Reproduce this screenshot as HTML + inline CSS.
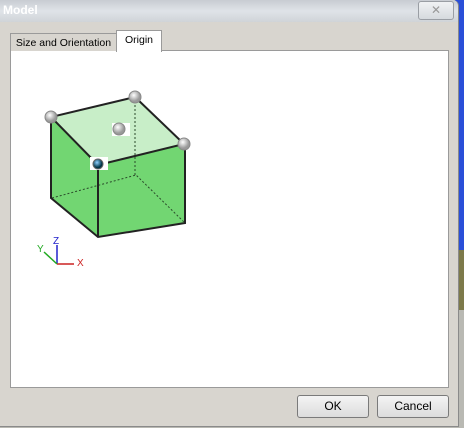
<!DOCTYPE html><html><head><style>
body{margin:0;width:464px;height:428px;overflow:hidden;background:#b9b9b3;font-family:"Liberation Sans",sans-serif;font-size:11px;position:relative}
.bg1{position:absolute;left:455px;top:0;width:9px;height:250px;background:#2a4fd8}
.bg2{position:absolute;left:455px;top:250px;width:9px;height:60px;background:#7d7a4a}
.win{position:absolute;left:0;top:0;width:458px;height:426px;background:#d8d5cf;border-right:1px solid #8a8a8a;border-bottom:1px solid #8a8a8a;border-radius:0 6px 0 0}
.title{position:absolute;left:0;top:0;width:458px;height:22px;background:linear-gradient(#c8ccd2,#dfe3e8 50%,#d0d4d8);border-radius:0 6px 0 0}
.title span{position:absolute;left:3px;top:3px;color:#fff;font-weight:bold;font-size:12px}
.x{position:absolute;left:418px;top:1px;width:34px;height:17px;border:1px solid #9a9ea4;border-radius:3px;background:linear-gradient(#f0f2f4,#d6dade);color:#999;text-align:center;font-size:12px;line-height:17px}
.panel{position:absolute;left:10px;top:50px;width:437px;height:336px;background:#fff;border:1px solid #9a9a9a}
.tab{position:absolute;background:#d8d5cf;border:1px solid #9a9a9a;border-bottom:none;text-align:center;white-space:nowrap;font-size:10.5px}
.btn{position:absolute;top:395px;width:70px;height:21px;border:1px solid #7a7a7a;border-radius:3px;background:linear-gradient(#f4f4f4,#dcdcdc);text-align:center;line-height:21px;font-size:12px}
</style></head><body>
<div class="bg1"></div><div class="bg2"></div>
<div class="win">
<div class="title"><span>Model</span><div class="x">✕</div></div>
<div class="panel"></div>
<div class="tab" style="left:10px;top:33px;width:105px;height:17px;line-height:18px">Size and Orientation</div>
<div class="tab" style="left:116px;top:30px;width:44px;height:21px;line-height:18px;background:#fff">Origin</div>
<svg style="position:absolute;left:0;top:0" width="464" height="428">
<radialGradient id="g" cx="0.4" cy="0.35"><stop offset="0" stop-color="#fff"/><stop offset="1" stop-color="#999"/></radialGradient>
<radialGradient id="b" cx="0.4" cy="0.35"><stop offset="0" stop-color="#8fd0ff"/><stop offset="1" stop-color="#034"/></radialGradient>
<polygon points="51,117 135,97 184,144 98,165" fill="#c8eec8"/>
<polygon points="51,117 98,165 98,237 52,198" fill="#72d672"/>
<polygon points="98,165 184,144 185,223 98,237" fill="#72d672"/>
<g stroke="#2a4a2a" stroke-width="1" stroke-dasharray="2,2" fill="none"><path d="M135,97V175M52,198L136,175L185,223"/></g>
<g stroke="#222" stroke-width="2" fill="none"><path d="M51,117L98,165L184,144L135,97L51,117V198L98,237L185,223V144M98,165V237"/></g>
<rect x="112" y="123" width="18" height="13" fill="#fff"/>
<rect x="90" y="157" width="18" height="13" fill="#fff"/>
<circle cx="51" cy="117" r="6" fill="url(#g)" stroke="#888"/>
<circle cx="135" cy="97" r="6" fill="url(#g)" stroke="#888"/>
<circle cx="184" cy="144" r="6" fill="url(#g)" stroke="#888"/>
<circle cx="119" cy="129" r="6" fill="url(#g)" stroke="#888"/>
<circle cx="98" cy="164" r="5" fill="url(#b)" stroke="#666"/>
<path d="M57,264V245" stroke="#22c" stroke-width="1.5"/>
<path d="M57,264H74" stroke="#c22" stroke-width="1.5"/>
<path d="M57,264L44,252" stroke="#2a2" stroke-width="1.5"/>
<text x="53" y="244" fill="#22c" font-size="10">Z</text>
<text x="77" y="266" fill="#c22" font-size="10">X</text>
<text x="37" y="252" fill="#2a2" font-size="10">Y</text>
</svg>
<div class="btn" style="left:297px">OK</div>
<div class="btn" style="left:377px">Cancel</div>
</div>
</body></html>
